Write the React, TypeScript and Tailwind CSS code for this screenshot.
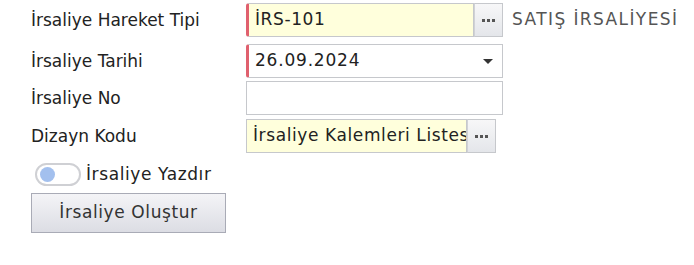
const FONT = "font-['DejaVu_Sans',Verdana,sans-serif]";

function Dots() {
  return (
    <div className="flex items-center gap-[2px]">
      <span className="w-[3px] h-[3px] bg-[#555]" />
      <span className="w-[3px] h-[3px] bg-[#555]" />
      <span className="w-[3px] h-[3px] bg-[#555]" />
    </div>
  );
}

function DotsButton() {
  return (
    <div className="w-[29px] h-full flex items-center justify-center bg-gradient-to-b from-[#f7f7f8] to-[#e4e6ea] border border-[#c6c8cc] border-l-[#d0d2d6]">
      <Dots />
    </div>
  );
}

export default function App() {
  return (
    <div className={`${FONT} w-[694px] h-[265px] bg-white text-[17px] text-[#222] relative overflow-hidden`}>
      <div className="flex flex-col pl-[31px]">
        {/* Hareket tipi */}
        <div className="flex items-center mt-[3px] h-[34px]">
          <div className="w-[215px] pt-[2px]">İrsaliye Hareket Tipi</div>
          <div className="flex h-full">
            <div className="w-[228px] h-full flex items-center bg-[#ffffdc] border border-[#c6c8cc] border-l-[3px] border-l-[#e0606e] rounded-l-[3px] pl-[6px] tracking-[0.6px]">
              İRS-101
            </div>
            <DotsButton />
          </div>
          <div className="ml-[9px] text-[#555] whitespace-nowrap tracking-[1.4px]">SATIŞ İRSALİYESİ</div>
        </div>

        {/* Tarih */}
        <div className="flex items-center mt-[7px] h-[34px]">
          <div className="w-[215px] pt-[2px]">İrsaliye Tarihi</div>
          <div className="w-[257px] h-full flex items-center justify-between bg-white border border-[#c6c8cc] border-l-[3px] border-l-[#e0606e] rounded-l-[3px] pl-[6px] pr-[9px]">
            <span className="tracking-[0.8px]">26.09.2024</span>
            <span className="w-0 h-0 border-l-[5px] border-r-[5px] border-t-[5px] border-l-transparent border-r-transparent border-t-[#333]" />
          </div>
        </div>

        {/* No */}
        <div className="flex items-center mt-[3px] h-[34px]">
          <div className="w-[215px] pt-[2px]">İrsaliye No</div>
          <div className="w-[257px] h-full bg-white border border-[#c6c8cc]" />
        </div>

        {/* Dizayn */}
        <div className="flex items-center mt-[4px] h-[34px]">
          <div className="w-[215px] pt-[2px]">Dizayn Kodu</div>
          <div className="flex h-full">
            <div className="w-[221px] h-full flex items-center bg-[#ffffdc] border border-[#c6c8cc] pl-[6px] overflow-hidden whitespace-nowrap tracking-[0.6px]">
              İrsaliye Kalemleri Listesi
            </div>
            <DotsButton />
          </div>
        </div>

        {/* Toggle */}
        <div className="flex items-center mt-[10px] h-[23px] ml-[4px]">
          <div className="w-[46px] h-[23px] rounded-full border-2 border-[#cfd0d4] bg-white flex items-center pl-[3px]">
            <span className="w-[15px] h-[15px] rounded-full bg-[#a3c0ee]" />
          </div>
          <span className="ml-[5px] tracking-[0.6px]">İrsaliye Yazdır</span>
        </div>

        {/* Buton */}
        <div className="mt-[7px] w-[195px] h-[40px] flex items-center justify-center border border-[#a9abb6] bg-gradient-to-b from-[#f4f4f7] to-[#dcdde4] text-[#333] tracking-[0.6px]">
          İrsaliye Oluştur
        </div>
      </div>
    </div>
  );
}
